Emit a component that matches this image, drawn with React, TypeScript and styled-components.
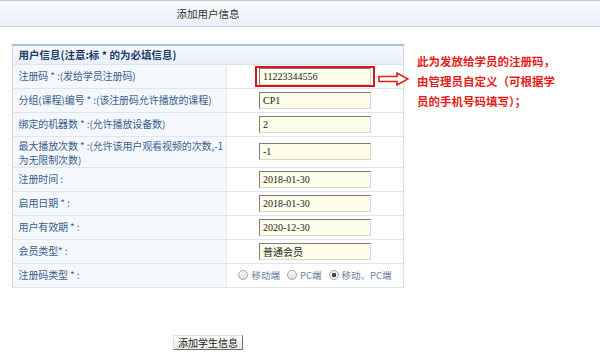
import * as React from 'react'
import styled, { createGlobalStyle } from 'styled-components'

const GlobalStyle = createGlobalStyle`
  html, body {
    margin: 0;
    padding: 0;
    background: #fff;
    font-family: "Noto Sans CJK SC", "Liberation Sans", sans-serif;
    font-size: 12px;
  }
`

const Page = styled.div`
  position: relative;
  width: 600px;
  height: 354px;
  overflow: hidden;
`

const TitleBar = styled.div`
  height: 25px;
  border-top: 1px solid #b8cde2;
  border-bottom: 1px solid #c2d5e8;
  background: linear-gradient(#fbfcfe, #e9eff9);
`

const TitleInner = styled.div`
  width: 416px;
  text-align: center;
  line-height: 25px;
  color: #333;
  font-size: 10.5px;
`

const Main = styled.div`
  width: 416px;
  display: flex;
  flex-direction: column;
  align-items: center;
  padding-top: 17px;
`

const Table = styled.table`
  width: 390px;
  border-collapse: collapse;
  table-layout: fixed;
  border-top: 2px solid #a9c3dc;
  border-left: 1px solid #d4dfeb;
  border-right: 1px solid #d4dfeb;
  border-bottom: 1px solid #d4dfeb;
`

const LabelCol = styled.col`
  width: 214px;
`

const FieldCol = styled.col`
  width: 176px;
`

const HeaderCell = styled.td`
  height: 19px;
  padding: 0 5px;
  background: linear-gradient(#f6f9fd, #eaf0f9);
  color: #1c3b6b;
  font-weight: bold;
  font-size: 10.5px;
  line-height: 12px;
  border-bottom: 1px solid #dbe3ee;
  box-sizing: border-box;
`

const LabelCell = styled.td<{ $tall?: boolean }>`
  height: ${p => (p.$tall ? 31 : 24)}px;
  padding: ${p => (p.$tall ? '2px 4px 0 5px' : '0 4px 0 5px')};
  background: #f4f7fc;
  color: #3b5f90;
  font-size: 10px;
  line-height: ${p => (p.$tall ? 14 : 12)}px;
  white-space: nowrap;
  letter-spacing: -0.1px;
  border-bottom: 1px solid #dfe6ef;
  border-right: 1px solid #dfe6ef;
  vertical-align: ${p => (p.$tall ? 'top' : 'middle')};
  box-sizing: border-box;
`

const FieldCell = styled.td`
  padding: 0;
  text-align: center;
  border-bottom: 1px solid #dfe6ef;
  vertical-align: middle;
  line-height: 0;
`

const InputFrame = styled.span<{ $marked?: boolean }>`
  display: inline-block;
  padding: 0 2px;
  border: 2px solid ${p => (p.$marked ? '#d9141b' : 'transparent')};
  line-height: 0;
`

const TextInput = styled.input`
  width: 112px;
  height: 17px;
  box-sizing: border-box;
  padding: 0 3px;
  margin: 0;
  background: #fdfdea;
  border-top: 1px solid #7c7c7c;
  border-left: 1px solid #7c7c7c;
  border-right: 1px solid #d6d6d6;
  border-bottom: 1px solid #d6d6d6;
  font-family: "Liberation Serif", "Noto Sans CJK SC", serif;
  font-size: 10px;
  color: #222;
  outline: none;
`

const RadioGroup = styled.div`
  display: inline-flex;
  align-items: center;
  gap: 7px;
  color: #6b7f99;
  font-size: 9.5px;
  line-height: 12px;
`

const RadioItem = styled.label`
  display: inline-flex;
  align-items: center;
  gap: 3px;
`

const RadioDot = styled.span<{ $on?: boolean }>`
  width: 8px;
  height: 8px;
  border-radius: 50%;
  border: 1px solid #a8a8a8;
  background: ${p => (p.$on ? 'radial-gradient(circle, #444 0 2px, #eee 2.5px)' : 'linear-gradient(#fafafa, #dcdcdc)')};
`

const SubmitButton = styled.button`
  margin-top: 47px;
  width: 70px;
  height: 15px;
  padding: 0;
  font-family: "Noto Sans CJK SC", sans-serif;
  font-size: 10px;
  line-height: 13px;
  color: #222;
  background: linear-gradient(#fdfdfd, #e8e8e8);
  border-top: 1px solid #e0e0e0;
  border-left: 1px solid #e0e0e0;
  border-right: 1px solid #6f6f6f;
  border-bottom: 1px solid #6f6f6f;
`

const Note = styled.div`
  position: absolute;
  left: 378px;
  top: 51px;
  display: flex;
  align-items: flex-start;
  gap: 8px;
`

const NoteArrow = styled.svg`
  margin-top: 21px;
  flex: none;
`

const NoteText = styled.div`
  color: #e31d1a;
  font-size: 11.5px;
  font-weight: bold;
  line-height: 20px;
  white-space: nowrap;
`

const rows = [
  { label: '分组(课程)编号 * :(该注册码允许播放的课程)', value: 'CP1' },
  { label: '绑定的机器数 * :(允许播放设备数)', value: '2' },
  { label: '最大播放次数 * :(允许该用户观看视频的次数,-1\n为无限制次数)', value: '-1', tall: true },
  { label: '注册时间 :', value: '2018-01-30' },
  { label: '启用日期 * :', value: '2018-01-30' },
  { label: '用户有效期 * :', value: '2020-12-30' },
  { label: '会员类型* :', value: '普通会员' }
]

const radios = [
  { text: '移动端', on: false },
  { text: 'PC端', on: false },
  { text: '移动、PC端', on: true }
]

export default function App() {
  return (
    <Page>
      <GlobalStyle />
      <TitleBar>
        <TitleInner>添加用户信息</TitleInner>
      </TitleBar>
      <Main>
        <Table>
          <colgroup>
            <LabelCol />
            <FieldCol />
          </colgroup>
          <tbody>
            <tr>
              <HeaderCell colSpan={2}>用户信息(注意:标 * 的为必填信息)</HeaderCell>
            </tr>
            <tr>
              <LabelCell>注册码 * :(发给学员注册码)</LabelCell>
              <FieldCell>
                <InputFrame $marked>
                  <TextInput defaultValue="11223344556" />
                </InputFrame>
              </FieldCell>
            </tr>
            {rows.map(row => (
              <tr key={row.label}>
                <LabelCell $tall={row.tall}>
                  {row.label.split('\n').map((line, i) => (
                    <React.Fragment key={i}>
                      {i > 0 && <br />}
                      {line}
                    </React.Fragment>
                  ))}
                </LabelCell>
                <FieldCell>
                  <InputFrame>
                    <TextInput defaultValue={row.value} />
                  </InputFrame>
                </FieldCell>
              </tr>
            ))}
            <tr>
              <LabelCell>注册码类型 * :</LabelCell>
              <FieldCell>
                <RadioGroup>
                  {radios.map(r => (
                    <RadioItem key={r.text}>
                      <RadioDot $on={r.on} />
                      {r.text}
                    </RadioItem>
                  ))}
                </RadioGroup>
              </FieldCell>
            </tr>
          </tbody>
        </Table>
        <SubmitButton>添加学生信息</SubmitButton>
      </Main>
      <Note>
        <NoteArrow width="31" height="14" viewBox="0 0 31 14">
          <path d="M1 4.5 H19 V1 L30 7 L19 13 V9.5 H1 Z" fill="#fff" stroke="#e31d1a" strokeWidth="1.6" />
        </NoteArrow>
        <NoteText>
          此为发放给学员的注册码，
          <br />
          由管理员自定义（可根据学
          <br />
          员的手机号码填写）；
        </NoteText>
      </Note>
    </Page>
  )
}
